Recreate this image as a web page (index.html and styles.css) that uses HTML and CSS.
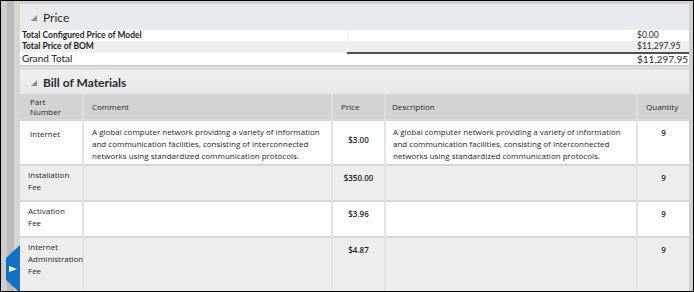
FILE: index.html
```html
<!DOCTYPE html>
<html lang="en">
<head>
    <meta charset="UTF-8">
    <title>Configuration Summary</title>
    <link rel="stylesheet" href="styles.css">
</head>
<body>
<div class="frame">
    <!-- Left side rail with the collapse tab -->
    <aside class="gutter">
        <svg class="side-tab" width="14" height="46" viewBox="0 0 14 46">
            <path d="M14 0V46H12L0 35V13Z" fill="#1470c4"/>
            <path d="M3 21L11 24L3 27Z" fill="#ffffff"/>
        </svg>
    </aside>

    <main class="content">
        <!-- Price section -->
        <div class="section-head price-head">
            <svg class="twisty" width="6" height="6" viewBox="0 0 6 6"><path d="M6 0V6H0Z" fill="#8c8c8c"/></svg>
            <span>Price</span>
        </div>
        <div class="total-row">
            <span class="total-label">Total Configured Price of Model</span>
            <span class="total-gap"></span>
            <span class="total-value">$0.00</span>
        </div>
        <div class="total-row alt">
            <span class="total-label">Total Price of BOM</span>
            <span class="total-gap"></span>
            <span class="total-value">$11,297.95</span>
        </div>
        <div class="total-row grand">
            <span class="total-label">Grand Total</span>
            <span class="total-gap"></span>
            <span class="total-value">$11,297.95</span>
        </div>

        <div class="section-sep"></div>

        <!-- Bill of materials section -->
        <div class="section-head bom-head">
            <svg class="twisty" width="6" height="6" viewBox="0 0 6 6"><path d="M6 0V6H0Z" fill="#8c8c8c"/></svg>
            <span>Bill of Materials</span>
        </div>
        <table class="bom">
            <colgroup>
                <col class="col-part">
                <col class="col-comment">
                <col class="col-price">
                <col class="col-desc">
                <col class="col-qty">
            </colgroup>
            <thead>
                <tr>
                    <th class="part">Part<br>Number</th>
                    <th>Comment</th>
                    <th>Price</th>
                    <th class="desc">Description</th>
                    <th>Quantity</th>
                </tr>
            </thead>
            <tbody>
                <tr class="row-tall">
                    <td class="part first">Internet</td>
                    <td class="text">A global computer network providing a variety of information and communication facilities, consisting of interconnected networks using standardized communication protocols.</td>
                    <td class="price first">$3.00</td>
                    <td class="text desc">A global computer network providing a variety of information and communication facilities, consisting of interconnected networks using standardized communication protocols.</td>
                    <td class="qty">9</td>
                </tr>
                <tr class="row-alt">
                    <td class="part">Installation<br>Fee</td>
                    <td class="text"></td>
                    <td class="price">$350.00</td>
                    <td class="text desc"></td>
                    <td class="qty">9</td>
                </tr>
                <tr>
                    <td class="part">Activation<br>Fee</td>
                    <td class="text"></td>
                    <td class="price">$3.96</td>
                    <td class="text desc"></td>
                    <td class="qty">9</td>
                </tr>
                <tr class="row-alt row-last">
                    <td class="part">Internet<br>Administration<br>Fee</td>
                    <td class="text"></td>
                    <td class="price">$4.87</td>
                    <td class="text desc"></td>
                    <td class="qty">9</td>
                </tr>
            </tbody>
        </table>
    </main>
</div>
</body>
</html>
```

FILE: styles.css
```css
/* Page reset */
body {
    margin: 0;
    padding: 0;
    background-color: #ffffff;
    font-family: Lato, "Open Sans", sans-serif;
    color: #333;
}

/* Outer window with black edge */
.frame {
    width: 694px;
    height: 292px;
    box-sizing: border-box;
    border: 1px solid #000;
    display: flex;
    overflow: hidden;
}

/* Left rail: three grey bands */
.gutter {
    position: relative;
    flex: 0 0 19px;
    background: linear-gradient(to right, #cdcdcd 0, #cdcdcd 6px, #bababa 6px, #bababa 13px, #d5d5d5 13px);
}

/* Blue collapse tab sits over the rail */
.side-tab {
    position: absolute;
    left: 5px;
    bottom: 0;
    display: block;
}

/* Main panel area */
.content {
    flex: 1;
    padding: 3px 4px 0 0;
    background-color: #d2d2d2;
    overflow: hidden;
}

/* Collapsible section header */
.section-head {
    display: flex;
    align-items: center;
    gap: 6px;
    padding-left: 11px;
    font-size: 12px;
    color: #2b2b2b;
}

.price-head {
    height: 26px;
    background-color: #e8ebee;
}

.bom-head {
    height: 24px;
    background: linear-gradient(#eff0f1, #e6e8ea);
    font-weight: bold;
}

.twisty {
    display: block;
    margin-top: 2px;
}

/* Price summary rows */
.total-row {
    display: grid;
    grid-template-columns: 327px 290px 1fr;
    height: 11px;
    line-height: 11px;
    background-color: #ffffff;
    font-size: 8.5px;
}

.total-row.alt {
    background-color: #efefef;
}

.total-label {
    padding-left: 2px;
    font-weight: bold;
    color: #1e1e1e;
}

.total-gap {
    border-left: 1px solid #f2f2f2;
}

.total-value {
    color: #2b2b2b;
}

.total-row.grand {
    height: 13px;
    line-height: 12px;
}

.total-row.grand .total-label {
    font-weight: normal;
    font-size: 10px;
    color: #222;
}

.total-row.grand .total-gap,
.total-row.grand .total-value {
    border-top: 2px solid #505050;
    border-left: none;
    line-height: 11px;
}

.total-row.grand .total-value {
    font-size: 10px;
}

/* Gap between the two sections */
.section-sep {
    height: 4px;
    border-top: 1px solid #c6c6c6;
    background-color: #dcdcdc;
}

/* Bill of materials table */
.bom {
    width: 669px;
    table-layout: fixed;
    border-collapse: collapse;
    font-family: "Open Sans", sans-serif;
    font-size: 8px;
    line-height: 12px;
    color: #262626;
}

.col-part { width: 63px; }
.col-comment { width: 249px; }
.col-price { width: 53px; }
.col-desc { width: 252px; }
.col-qty { width: 52px; }

.bom th {
    height: 25px;
    padding: 0 8px;
    background-color: #d3d3d3;
    text-align: left;
    font-weight: normal;
    line-height: 10px;
    vertical-align: middle;
    border-left: 2px solid #dedede;
}

.bom th.part {
    padding-left: 10px;
}

.bom th.desc {
    padding-left: 6px;
}

.bom th:first-child,
.bom td:first-child {
    border-left: none;
}

/* Row heights live on the rows, cells only pad their text */
.bom tbody tr {
    height: 36px;
}

.bom tbody tr.row-tall {
    height: 45px;
}

.bom tbody tr.row-last {
    height: 60px;
}

.bom td {
    padding: 5px 8px 0;
    vertical-align: top;
    background-color: #ffffff;
    border-top: 2px solid #d6d6d6;
    border-left: 2px solid #e4e4e4;
}

.bom tr.row-alt td {
    background-color: #ededed;
}

.bom td.part {
    padding: 3px 0 0 8px;
    overflow: visible;
}

.bom td.part.first {
    padding: 7px 0 0 10px;
}

.bom td.text {
    padding: 5px 8px 0 8px;
}

.bom td.text.desc {
    padding: 5px 12px 0 7px;
}

/* Price and quantity read a touch heavier */
.bom td.price {
    text-align: center;
    padding: 6px 0 0;
    font-weight: 600;
    color: #1e1e1e;
}

.bom td.price.first {
    padding-top: 13px;
}

.bom td.qty {
    text-align: center;
    padding: 6px 0 0;
    font-weight: 600;
    color: #1e1e1e;
}
```
